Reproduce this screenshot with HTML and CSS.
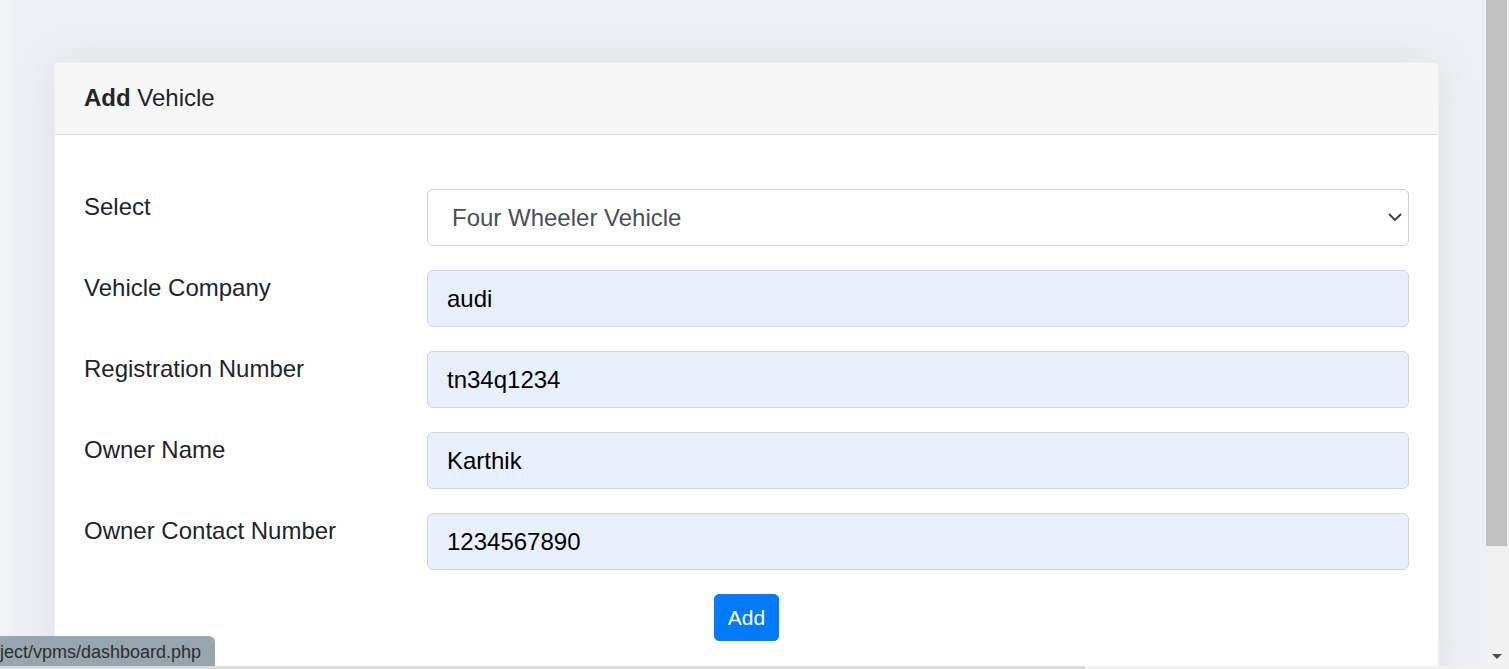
FILE: index.html
```html
<!DOCTYPE html>
<html lang="en">
<head>
<meta charset="utf-8">
<title>Add Vehicle</title>
<link rel="stylesheet" href="styles.css">
</head>
<body>
<div class="window">
  <div class="viewport">
    <div class="side-strip"></div>
    <main class="content">
      <section class="card">
        <header class="card-header"><strong>Add</strong> Vehicle</header>
        <form class="card-body">
          <div class="form-row">
            <label class="col-label">Select</label>
            <div class="col-field select-wrap">
              <select class="form-select">
                <option>Four Wheeler Vehicle</option>
              </select>
              <svg class="chevron" width="14" height="8" viewBox="0 0 14 8"><path d="M1 1l6 6 6-6" fill="none" stroke="#3c3c3c" stroke-width="1.8"/></svg>
            </div>
          </div>
          <div class="form-row">
            <label class="col-label">Vehicle Company</label>
            <div class="col-field"><input class="form-input" value="audi"></div>
          </div>
          <div class="form-row">
            <label class="col-label">Registration Number</label>
            <div class="col-field"><input class="form-input" value="tn34q1234"></div>
          </div>
          <div class="form-row">
            <label class="col-label">Owner Name</label>
            <div class="col-field"><input class="form-input" value="Karthik"></div>
          </div>
          <div class="form-row">
            <label class="col-label">Owner Contact Number</label>
            <div class="col-field"><input class="form-input" value="1234567890"></div>
          </div>
          <div class="actions">
            <button type="button" class="btn">Add</button>
          </div>
        </form>
      </section>
    </main>
    <div class="status-bar">ject/vpms/dashboard.php</div>
  </div>
  <div class="vscroll">
    <div class="vthumb"></div>
    <div class="vtrack"><span class="arrow-down"></span></div>
  </div>
</div>
<div class="hscroll"><div class="hthumb"></div></div>
</body>
</html>
```

FILE: styles.css
```css
* { box-sizing: border-box; }
html, body { margin: 0; padding: 0; height: 100%; overflow: hidden; }
body {
  font-family: "Liberation Sans", Arial, sans-serif;
  color: #212529;
  background: #f0f1f5;
}
.window {
  display: flex;
  height: 666px;
}
.viewport {
  position: relative;
  flex: 1;
  display: flex;
  overflow: hidden;
  background: #eff0f5;
}
.side-strip {
  width: 9px;
  flex: none;
  background: #f3f4f7;
}
.content {
  flex: 1;
  padding: 62px 47px 0 45px;
}
.card {
  background: #fff;
  border: 1px solid rgba(0,0,0,.06);
  border-radius: 6px;
  box-shadow: 0 0 40px rgba(100,110,140,.12);
  overflow: hidden;
}
.card-header {
  background: #f7f7f7;
  border-bottom: 1px solid #dcdcdc;
  padding: 17px 29px 18px;
  font-size: 24px;
  line-height: 36px;
}
.card-header strong { font-weight: 700; }
.card-body {
  padding: 54px 29px 40px;
}
.form-row {
  display: flex;
  margin-bottom: 24px;
}
.col-label {
  width: 343px;
  flex: none;
  font-size: 24px;
  line-height: 36px;
  color: #212529;
}
.col-field {
  flex: 1;
}
.select-wrap { position: relative; }
.form-select, .form-input {
  display: block;
  width: 100%;
  height: 57px;
  border: 1px solid #ced4da;
  border-radius: 6px;
  font-family: "Liberation Sans", Arial, sans-serif;
  font-size: 24px;
  outline: none;
}
.form-select {
  -webkit-appearance: none;
  appearance: none;
  background: #fff;
  color: #495057;
  padding: 0 40px 0 24px;
}
.form-input {
  background: #e8f0fe;
  color: #000;
  padding: 0 19px;
}
.chevron {
  position: absolute;
  right: 7px;
  top: 24px;
}
.actions {
  display: flex;
  justify-content: center;
  margin-left: -30px;
  margin-right: -30px;
}
.btn {
  background: #007bff;
  color: #fff;
  border: 1px solid #007bff;
  border-radius: 5px;
  font-family: "Liberation Sans", Arial, sans-serif;
  font-size: 21px;
  line-height: 31px;
  padding: 7px 12px;
  height: 47px;
  width: 65px;
}
.status-bar {
  position: absolute;
  left: 0;
  bottom: -3px;
  width: 215px;
  height: 33px;
  background: #97a5ae;
  border-top-right-radius: 6px;
  color: #2b2f33;
  font-size: 18px;
  line-height: 33px;
  white-space: nowrap;
  overflow: hidden;
}
.vscroll {
  width: 23px;
  flex: none;
  display: flex;
  flex-direction: column;
  background: #f1f1f1;
}
.vthumb {
  height: 546px;
  width: 21px;
  background: #c1c1c1;
}
.vtrack {
  flex: 1;
  position: relative;
}
.arrow-down {
  position: absolute;
  left: 6px;
  bottom: 7px;
  width: 0;
  height: 0;
  border-left: 5px solid transparent;
  border-right: 5px solid transparent;
  border-top: 5px solid #505050;
}
.hscroll {
  height: 3px;
  background: #f1f1f1;
}
.hthumb {
  width: 1085px;
  height: 3px;
  background: #dcdcdc;
}
```
